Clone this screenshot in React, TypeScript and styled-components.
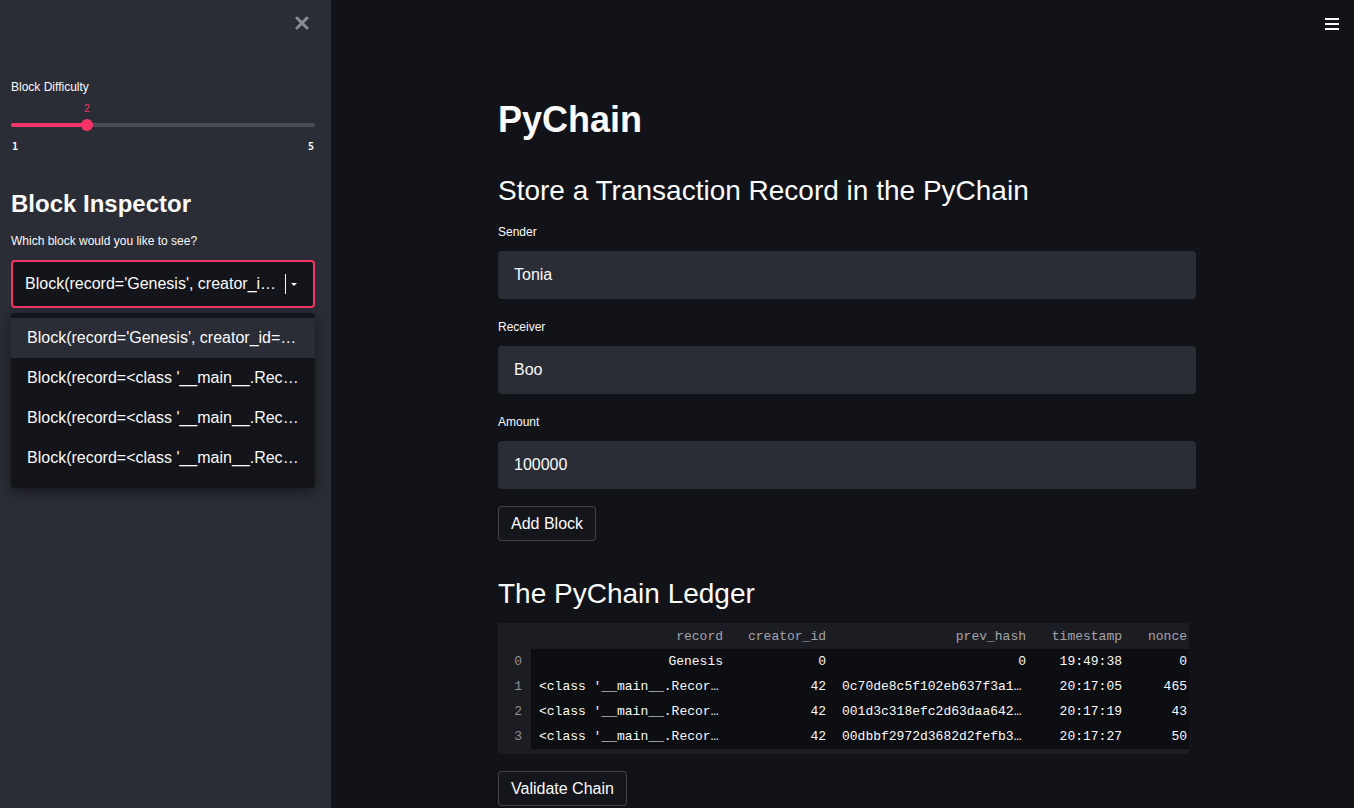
import { FC } from "react";
import styled, { createGlobalStyle } from "styled-components";

const PINK = "#f63366";

const GlobalStyle = createGlobalStyle`
  html, body {
    margin: 0;
    padding: 0;
    height: 100%;
    background: #121318;
    font-family: "Liberation Sans", Arial, sans-serif;
    color: #fafafa;
  }
  #root {
    height: 100%;
  }
  * {
    box-sizing: border-box;
  }
`;

const Page = styled.div`
  display: flex;
  width: 1354px;
  height: 808px;
  overflow: hidden;
`;

const Sidebar = styled.aside`
  position: relative;
  flex: 0 0 331px;
  width: 331px;
  min-width: 0;
  background: #2b2d36;
  padding: 0 16px 0 11px;
  display: flex;
  flex-direction: column;
`;

const CloseRow = styled.div`
  display: flex;
  justify-content: flex-end;
  padding: 16px 6px 0 0;
  height: 79px;
`;

const SmallLabel = styled.div`
  font-size: 12px;
  line-height: 16px;
  color: #fafafa;
`;

const SliderWrap = styled.div`
  position: relative;
  margin-top: 4px;
  height: 58px;
`;

const SliderValue = styled.div<{ $pct: number }>`
  position: absolute;
  top: 3px;
  left: ${({ $pct }) => $pct}%;
  transform: translateX(-50%);
  font-family: "Liberation Sans", Arial, sans-serif;
  font-size: 10px;
  line-height: 14px;
  color: ${PINK};
`;

const Track = styled.div`
  position: absolute;
  top: 24px;
  left: 0;
  right: 0;
  height: 4px;
  border-radius: 2px;
  background: #4a4c56;
`;

const Fill = styled.div`
  height: 100%;
  border-radius: 2px;
  background: ${PINK};
`;

const Thumb = styled.div<{ $pct: number }>`
  position: absolute;
  top: 20px;
  left: ${({ $pct }) => $pct}%;
  width: 12px;
  height: 12px;
  margin-left: -6px;
  border-radius: 50%;
  background: ${PINK};
`;

const TickRow = styled.div`
  position: absolute;
  top: 41px;
  left: 0;
  right: 0;
  display: flex;
  justify-content: space-between;
  font-family: "DejaVu Sans Mono", monospace;
  font-size: 10px;
  font-weight: 700;
  line-height: 14px;
  color: #fafafa;
  padding: 0 1px 0 1px;
`;

const SideHeading = styled.h2`
  margin: 32px 0 0;
  font-size: 24px;
  line-height: 29px;
  font-weight: 700;
`;

const SelectLabel = styled(SmallLabel)`
  margin-top: 15px;
`;

const SelectBox = styled.div`
  margin-top: 11px;
  width: 100%;
  min-width: 0;
  height: 48px;
  border: 2px solid ${PINK};
  border-radius: 4px;
  background: #14151a;
  display: flex;
  align-items: center;
  padding: 0 14px 0 12px;
  font-size: 16px;
`;

const SelectText = styled.span`
  flex: 1;
  min-width: 0;
  white-space: nowrap;
  overflow: hidden;
  text-overflow: ellipsis;
`;

const SelectDivider = styled.span`
  flex: 0 0 1px;
  height: 20px;
  background: #fafafa;
  margin: 0 3px 0 7px;
`;

const Menu = styled.ul`
  position: absolute;
  top: 313px;
  left: 11px;
  width: 304px;
  margin: 0;
  padding: 5px 0 10px;
  list-style: none;
  background: #14151a;
  border-radius: 4px;
  box-shadow: 0 4px 14px rgba(0, 0, 0, 0.45);
`;

const MenuItem = styled.li<{ $active?: boolean }>`
  height: 40px;
  line-height: 40px;
  padding: 0 16px;
  font-size: 16px;
  white-space: nowrap;
  overflow: hidden;
  text-overflow: ellipsis;
  background: ${({ $active }) => ($active ? "#2b2d36" : "transparent")};
  color: #fafafa;
`;

const Main = styled.main`
  position: relative;
  flex: 1;
  min-width: 0;
  display: flex;
  justify-content: flex-start;
  padding-left: 167px;
`;

const MenuButton = styled.div`
  position: absolute;
  top: 18px;
  right: 15px;
  display: flex;
  flex-direction: column;
  gap: 3px;
`;

const MenuLine = styled.span`
  width: 14px;
  height: 2px;
  background: #fafafa;
`;

const Content = styled.div`
  width: 698px;
  flex: 0 0 698px;
  display: flex;
  flex-direction: column;
  align-items: flex-start;
`;

const Title = styled.h1`
  margin: 98px 0 0;
  font-size: 36px;
  line-height: 43px;
  font-weight: 700;
`;

const Heading = styled.h2<{ $top: number }>`
  margin: ${({ $top }) => $top}px 0 0;
  font-size: 28px;
  line-height: 34px;
  font-weight: 400;
`;

const FieldLabel = styled(SmallLabel)<{ $top: number }>`
  margin-top: ${({ $top }) => $top}px;
`;

const Input = styled.div`
  margin-top: 11px;
  width: 100%;
  height: 48px;
  border-radius: 4px;
  background: #2b2d36;
  display: flex;
  align-items: center;
  padding: 0 16px;
  font-size: 16px;
`;

const Button = styled.button<{ $top: number }>`
  margin-top: ${({ $top }) => $top}px;
  height: 35px;
  padding: 0 12px;
  border: 1px solid rgba(250, 250, 250, 0.2);
  border-radius: 4px;
  background: #14161c;
  color: #fafafa;
  font-family: "Liberation Sans", Arial, sans-serif;
  font-size: 16px;
`;

const TableFrame = styled.div`
  margin-top: 12px;
  width: 691px;
  background: #1c1d23;
  padding: 1px 0 5px;
  overflow: hidden;
`;

const Table = styled.table`
  border-collapse: collapse;
  font-family: "Liberation Mono", "Courier New", monospace;
  font-size: 13px;
  table-layout: fixed;
  width: 691px;
`;

const HeadCell = styled.th<{ $pr?: number }>`
  height: 25px;
  padding: 0 ${({ $pr }) => $pr ?? 8}px 0 0;
  text-align: right;
  font-weight: 400;
  color: #a3a4ab;
  white-space: nowrap;
`;

const IndexCell = styled.th`
  height: 25px;
  padding: 0 9px 0 0;
  text-align: right;
  font-weight: 400;
  color: #8f9097;
`;

const Cell = styled.td<{ $left?: boolean; $pr?: number }>`
  height: 25px;
  padding: 0 ${({ $pr }) => $pr ?? 8}px 0 8px;
  background: #0d0e12;
  color: #fafafa;
  text-align: ${({ $left }) => ($left ? "left" : "right")};
  white-space: nowrap;
  overflow: hidden;
  text-overflow: ellipsis;
`;

const CloseIcon: FC = () => (
  <svg width="14" height="14" viewBox="0 0 14 14">
    <path d="M2 2 L12 12 M12 2 L2 12" stroke="#8b8c93" strokeWidth="3" strokeLinecap="round" />
  </svg>
);

const Caret: FC = () => (
  <svg width="10" height="10" viewBox="0 0 10 10">
    <path d="M2 4 L8 4 L5 7 Z" fill="#fafafa" />
  </svg>
);

const blocks = [
  "Block(record='Genesis', creator_id=0, prev_hash=0, timestamp='19:49:38', nonce=0)",
  "Block(record=<class '__main__.Record'>, creator_id=42)",
  "Block(record=<class '__main__.Record'>, creator_id=42)",
  "Block(record=<class '__main__.Record'>, creator_id=42)",
];

const rows = [
  { rec: "Genesis", id: "0", hash: "0", ts: "19:49:38", nonce: "0", left: false },
  { rec: "<class '__main__.Recor…", id: "42", hash: "0c70de8c5f102eb637f3a1…", ts: "20:17:05", nonce: "465", left: true },
  { rec: "<class '__main__.Recor…", id: "42", hash: "001d3c318efc2d63daa642…", ts: "20:17:19", nonce: "43", left: true },
  { rec: "<class '__main__.Recor…", id: "42", hash: "00dbbf2972d3682d2fefb3…", ts: "20:17:27", nonce: "50", left: true },
];

const colWidths = [33, 200, 103, 200, 96, 59];

const pct = 25;

export default function App() {
  return (
    <Page>
      <GlobalStyle />
      <Sidebar>
        <CloseRow>
          <CloseIcon />
        </CloseRow>
        <SmallLabel>Block Difficulty</SmallLabel>
        <SliderWrap>
          <SliderValue $pct={pct}>2</SliderValue>
          <Track>
            <Fill style={{ width: `${pct}%` }} />
          </Track>
          <Thumb $pct={pct} />
          <TickRow>
            <span>1</span>
            <span>5</span>
          </TickRow>
        </SliderWrap>
        <SideHeading>Block Inspector</SideHeading>
        <SelectLabel>Which block would you like to see?</SelectLabel>
        <SelectBox>
          <SelectText>{blocks[0]}</SelectText>
          <SelectDivider />
          <Caret />
        </SelectBox>
        <Menu>
          {blocks.map((b, i) => (
            <MenuItem key={i} $active={i === 0}>
              {b}
            </MenuItem>
          ))}
        </Menu>
      </Sidebar>
      <Main>
        <MenuButton>
          <MenuLine />
          <MenuLine />
          <MenuLine />
        </MenuButton>
        <Content>
          <Title>PyChain</Title>
          <Heading $top={33}>Store a Transaction Record in the PyChain</Heading>
          <FieldLabel $top={16}>Sender</FieldLabel>
          <Input>Tonia</Input>
          <FieldLabel $top={20}>Receiver</FieldLabel>
          <Input>Boo</Input>
          <FieldLabel $top={20}>Amount</FieldLabel>
          <Input>100000</Input>
          <Button $top={17}>Add Block</Button>
          <Heading $top={36}>The PyChain Ledger</Heading>
          <TableFrame>
            <Table>
              <colgroup>
                {colWidths.map((w, i) => (
                  <col key={i} style={{ width: w }} />
                ))}
              </colgroup>
              <thead>
                <tr>
                  <HeadCell />
                  <HeadCell>record</HeadCell>
                  <HeadCell>creator_id</HeadCell>
                  <HeadCell>prev_hash</HeadCell>
                  <HeadCell>timestamp</HeadCell>
                  <HeadCell $pr={2}>nonce</HeadCell>
                </tr>
              </thead>
              <tbody>
                {rows.map((r, i) => (
                  <tr key={i}>
                    <IndexCell>{i}</IndexCell>
                    <Cell $left={r.left}>{r.rec}</Cell>
                    <Cell>{r.id}</Cell>
                    <Cell $left={r.left}>{r.hash}</Cell>
                    <Cell>{r.ts}</Cell>
                    <Cell $pr={2}>{r.nonce}</Cell>
                  </tr>
                ))}
              </tbody>
            </Table>
          </TableFrame>
          <Button $top={17}>Validate Chain</Button>
        </Content>
      </Main>
    </Page>
  );
}
